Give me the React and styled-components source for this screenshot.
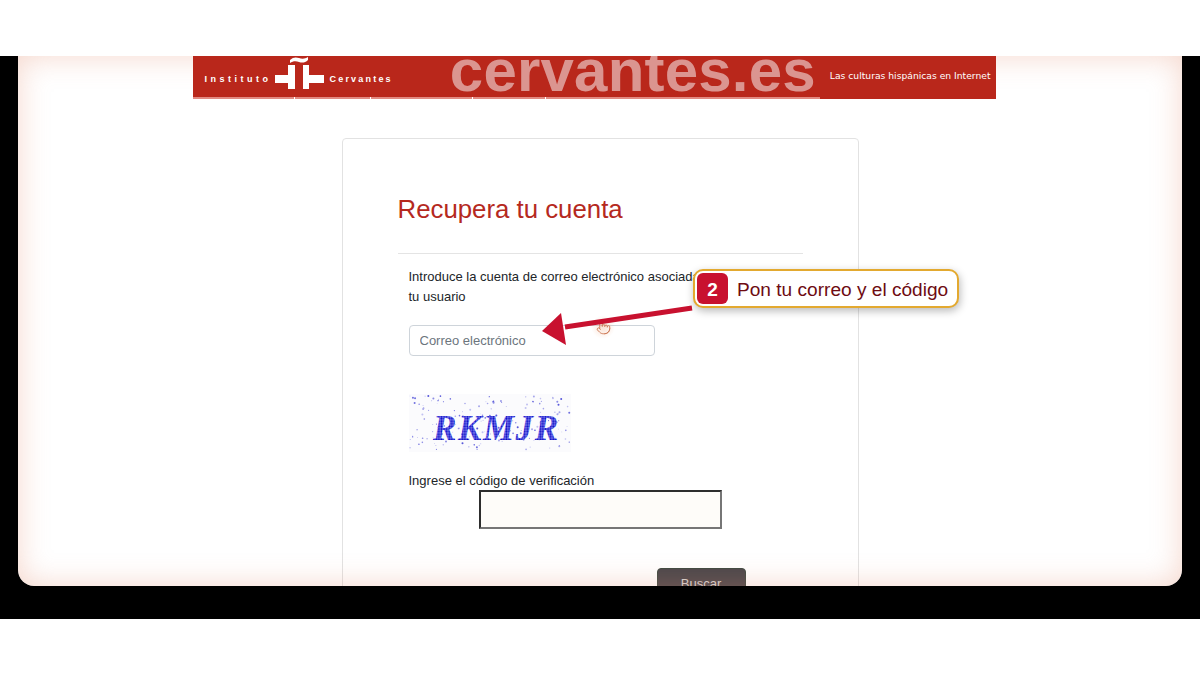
import React from 'react';
import styled, { createGlobalStyle } from 'styled-components';
import { Pointer } from 'lucide-react';

const GlobalStyle = createGlobalStyle`
  html, body {
    margin: 0;
    padding: 0;
    background: #fff;
    font-family: "Liberation Sans", Arial, sans-serif;
  }
`;

const Page = styled.div`
  width: 1200px;
  height: 675px;
  overflow: hidden;
  display: flex;
  flex-direction: column;
  background: #fff;
`;

const TopStrip = styled.div`
  height: 56px;
  flex: none;
`;

const Stage = styled.div`
  height: 563px;
  flex: none;
  background: #000;
  padding: 0 18px 33px;
  box-sizing: border-box;
`;

const Window = styled.div`
  position: relative;
  height: 100%;
  overflow: hidden;
  background: #fff;
  border-radius: 0 0 16px 16px;
  display: flex;
  flex-direction: column;
  align-items: center;

  &::after {
    content: '';
    position: absolute;
    inset: 0;
    pointer-events: none;
    border-radius: 0 0 16px 16px;
    box-shadow: inset 0 0 30px rgba(226, 140, 110, 0.36);
  }
`;

const Banner = styled.header`
  width: 803px;
  height: 43px;
  flex: none;
  position: relative;
  z-index: 1;
  overflow: hidden;
  margin-right: 12px;
  background: #b9271b;
  display: flex;
  align-items: center;
  padding-left: 12px;
  box-sizing: border-box;
  color: #fff;
`;

const BannerLine = styled.div`
  position: absolute;
  left: 0;
  bottom: 0;
  width: 627px;
  height: 2px;
  background: #e28a82;
`;

const BannerTick = styled.div`
  position: absolute;
  left: ${p => p.$left}px;
  bottom: 0;
  width: 1px;
  height: 2px;
  background: #fff;
`;

const BrandWord = styled.span`
  font-size: 9px;
  font-weight: bold;
  letter-spacing: ${p => p.$spacing}px;
  white-space: nowrap;
  padding-top: 2px;
`;

const BrandMark = styled.svg`
  width: 50px;
  height: 43px;
  flex: none;
  margin: 0 5px 0 3px;
`;

const SiteName = styled.span`
  font-size: 60px;
  font-weight: bold;
  line-height: 42px;
  letter-spacing: 0.2px;
  padding-bottom: 14px;
  color: #db9590;
  margin-left: 57px;
  white-space: nowrap;
`;

const Tagline = styled.span`
  font-family: "DejaVu Sans", sans-serif;
  font-size: 9.2px;
  margin-left: 14px;
  white-space: nowrap;
  padding-bottom: 5px;
`;

const Card = styled.section`
  width: 517px;
  flex: none;
  margin-top: 39px;
  padding: 53px 55px 0;
  box-sizing: border-box;
  background: #fff;
  border: 1px solid #e2e2e2;
  border-radius: 4px;
`;

const Title = styled.h1`
  margin: 0;
  padding-bottom: 27px;
  font-size: 25.8px;
  line-height: 34px;
  font-weight: 400;
  color: #b5291e;
  border-bottom: 1px solid #e4e4e4;
`;

const Form = styled.form`
  padding: 13px 0 0 11px;
  display: flex;
  flex-direction: column;
  align-items: flex-start;
`;

const Intro = styled.p`
  margin: 0;
  width: 312px;
  font-size: 13px;
  line-height: 20px;
  color: #212529;
`;

const EmailInput = styled.input`
  width: 246px;
  height: 31px;
  margin-top: 18px;
  padding: 0 10px;
  box-sizing: border-box;
  border: 1px solid #ced4da;
  border-radius: 4px;
  font-family: inherit;
  font-size: 13px;
  background: #fff;

  &::placeholder {
    color: #6c757d;
    opacity: 1;
  }
`;

const Captcha = styled.svg`
  width: 162px;
  height: 58px;
  margin-top: 38px;
  display: block;
`;

const CodeLabel = styled.label`
  margin-top: 19px;
  font-size: 13px;
  line-height: 19px;
  color: #212529;
`;

const CodeInput = styled.input`
  width: 243px;
  height: 39px;
  margin: 0 0 0 70px;
  box-sizing: border-box;
  background: #fefcf9;
  border-style: solid;
  border-width: 2px;
  border-color: #2d2d2d #767676 #767676 #2d2d2d;
`;

const SubmitButton = styled.button`
  width: 89px;
  height: 30px;
  margin: 39px 0 0 248px;
  padding: 0;
  border: 1px solid #3f4a42;
  border-radius: 4px;
  background: #4b474b;
  color: #d6d2d0;
  font-family: inherit;
  font-size: 13px;
`;

const CursorGlow = styled.div`
  position: absolute;
  left: 573px;
  top: 259px;
  width: 24px;
  height: 24px;
  display: flex;
  align-items: center;
  justify-content: center;
  border-radius: 50%;
  color: #d07f5c;
  background: radial-gradient(circle, rgba(240, 170, 130, 0.35), rgba(240, 170, 130, 0) 70%);
`;

const ArrowLayer = styled.svg`
  position: absolute;
  left: 516px;
  top: 240px;
  width: 170px;
  height: 60px;
`;

const Callout = styled.div`
  position: absolute;
  left: 675px;
  top: 213px;
  width: 266px;
  height: 39px;
  box-sizing: border-box;
  padding: 2px 8px 2px 2px;
  display: flex;
  align-items: center;
  gap: 9px;
  background: #fff;
  border: 2px solid #e3a92f;
  border-radius: 10px;
  box-shadow: 1px 3px 8px rgba(0, 0, 0, 0.28);
  white-space: nowrap;
`;

const StepBadge = styled.span`
  width: 31px;
  height: 31px;
  flex: none;
  display: flex;
  align-items: center;
  justify-content: center;
  padding-top: 2px;
  box-sizing: border-box;
  border-radius: 6px;
  background: #c8112f;
  color: #fff;
  font-size: 19px;
  font-weight: bold;
`;

const CalloutText = styled.span`
  font-size: 19.1px;
  padding-top: 2px;
  color: #6e0b12;
`;

const tickOffsets = [101, 177, 279, 352];

// seeded so the speckle stays the same between runs
const speckle = Array.from({ length: 170 }, (_, i) => {
  const a = Math.sin(i * 12.9898) * 43758.5453;
  const b = Math.sin(i * 78.233) * 12543.1234;
  return {
    x: (a - Math.floor(a)) * 160 + 1,
    y: (b - Math.floor(b)) * 54 + 2,
    r: 0.4 + ((i * 7) % 4) * 0.2,
  };
});

const CaptchaImage = () => (
  <Captcha viewBox="0 0 162 58">
    <defs>
      <pattern id="captchaDots" width="2.6" height="2.6" patternUnits="userSpaceOnUse">
        <rect width="2.6" height="2.6" fill="#7c7cec" />
        <circle cx="1.3" cy="1.3" r="1" fill="#0a0ac4" />
      </pattern>
    </defs>
    <rect width="162" height="58" fill="#fbfbfd" />
    {speckle.map((d, i) => (
      <circle key={i} cx={d.x} cy={d.y} r={d.r} fill="#3c3cd4" opacity={0.3 + (i % 5) * 0.14} />
    ))}
    <text
      x="24"
      y="46"
      fontFamily="'Liberation Serif', serif"
      fontStyle="italic"
      fontWeight="bold"
      fontSize="35"
      letterSpacing="1.6"
      fill="url(#captchaDots)"
    >
      RKMJR
    </text>
  </Captcha>
);

const App = () => {
  return (
    <Page>
      <GlobalStyle />
      <TopStrip />
      <Stage>
        <Window>
          <Banner>
            <BrandWord $spacing={3.5}>Instituto</BrandWord>
            <BrandMark viewBox="0 0 50 43">
              <path d="M15 4c3-3 6-3 9-2s6 1 9-1v3c-3 3-6 3-9 2s-6-1-9 1z" fill="#fff" />
              <path d="M0 19h13V9h7v24h-7v-6H0zM28 9h6v10h15v8H34v6h-6z" fill="#fff" />
            </BrandMark>
            <BrandWord $spacing={2.2}>Cervantes</BrandWord>
            <SiteName>cervantes.es</SiteName>
            <Tagline>Las culturas hispánicas en Internet</Tagline>
            <BannerLine />
            {tickOffsets.map(left => (
              <BannerTick key={left} $left={left} />
            ))}
          </Banner>
          <Card>
            <Title>Recupera tu cuenta</Title>
            <Form>
              <Intro>Introduce la cuenta de correo electrónico asociada a tu usuario</Intro>
              <EmailInput placeholder="Correo electrónico" />
              <CaptchaImage />
              <CodeLabel>Ingrese el código de verificación</CodeLabel>
              <CodeInput />
              <SubmitButton type="button">Buscar</SubmitButton>
            </Form>
          </Card>
          <CursorGlow>
            <Pointer size={15} strokeWidth={1.6} />
          </CursorGlow>
          <ArrowLayer viewBox="0 0 170 60">
            <path d="M158 12 L31 31" stroke="#c8112f" strokeWidth="5" fill="none" />
            <path d="M8 35 L27 17 L32 49 Z" fill="#c8112f" />
          </ArrowLayer>
          <Callout>
            <StepBadge>2</StepBadge>
            <CalloutText>Pon tu correo y el código</CalloutText>
          </Callout>
        </Window>
      </Stage>
    </Page>
  );
};

export default App;
